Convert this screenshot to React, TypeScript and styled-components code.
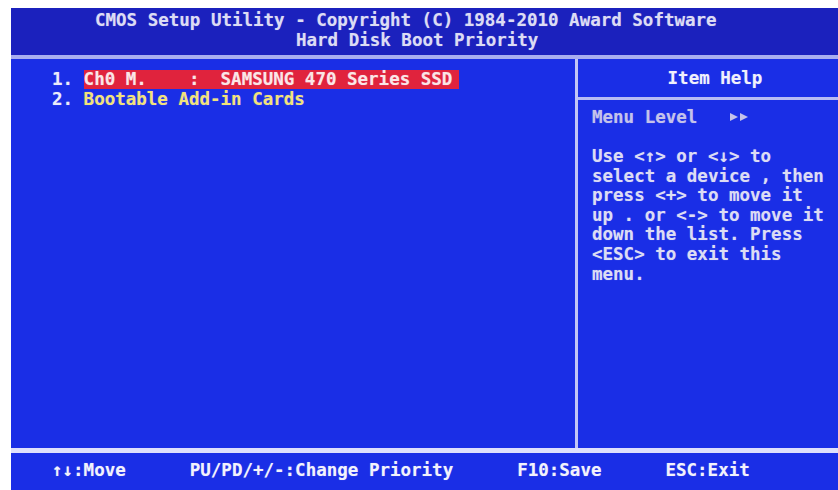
import React from "react";
import styled, { createGlobalStyle } from "styled-components";

const GlobalStyle = createGlobalStyle`
  html, body {
    margin: 0;
    padding: 0;
    background: #ffffff;
  }
  body {
    font-family: "DejaVu Sans Mono", "Liberation Mono", monospace;
  }
`;

const Screen = styled.div`
  margin: 8px 0 0 11px;
  width: 827px;
  height: 482px;
  display: flex;
  flex-direction: column;
  background: #1a2ee6;
  font-family: "DejaVu Sans Mono", "Liberation Mono", monospace;
  font-weight: bold;
  font-size: 17.5px;
  line-height: 20px;
  color: #e4e4f8;
  text-shadow: 0 0 1px rgba(230, 230, 255, 0.45);
  overflow: hidden;
  white-space: pre;
`;

const Header = styled.header`
  height: 47px;
  flex: none;
  box-sizing: border-box;
  padding-top: 2px;
  background: #1b21bd;
  display: flex;
  flex-direction: column;
`;

const TitleLine = styled.div<{ $indent: number }>`
  padding-left: ${(p) => p.$indent}px;
  color: #dcdcf4;
`;

const HRule = styled.div<{ $size: number; $color: string }>`
  height: ${(p) => p.$size}px;
  background: ${(p) => p.$color};
  flex: none;
`;

const Body = styled.main`
  flex: 1;
  display: flex;
  min-height: 0;
`;

const MenuPane = styled.section`
  width: 564px;
  box-sizing: border-box;
  padding: 10px 0 0 41px;
  display: flex;
  flex-direction: column;
`;

const MenuRow = styled.div`
  display: flex;
  height: 20px;
  align-items: center;
`;

const Index = styled.span`
  color: #ececfa;
`;

const Entry = styled.span<{ $selected?: boolean }>`
  color: ${(p) => (p.$selected ? "#fbe6e6" : "#f2e27a")};
  background: ${(p) => (p.$selected ? "#e0233d" : "transparent")};
  height: 19px;
  line-height: 19px;
  padding-right: ${(p) => (p.$selected ? 7 : 0)}px;
`;

const VRule = styled.div`
  width: 3px;
  background: #c2c6f6;
  flex: none;
`;

const HelpPane = styled.aside`
  flex: 1;
  display: flex;
  flex-direction: column;
`;

const HelpTitle = styled.div`
  height: 38px;
  display: flex;
  align-items: center;
  justify-content: center;
  padding-left: 14px;
  color: #f0f0fc;
`;

const HelpBody = styled.div`
  padding: 7px 0 0 14px;
  display: flex;
  flex-direction: column;
`;

const MenuLevel = styled.div`
  color: #c4c2ea;
  height: 20px;
  margin-bottom: 20px;
  display: flex;
  align-items: center;
`;

const Arrows = styled.svg`
  margin-left: 32px;
  display: block;
`;

const HelpLine = styled.div`
  height: 19.6px;
  line-height: 19.6px;
  color: #dcdcf4;
`;

const Footer = styled.footer`
  flex: none;
  height: 37px;
  box-sizing: border-box;
  display: flex;
  gap: 64px;
  padding: 7px 0 0 41px;
  color: #f2f2fc;
`;

const helpLines = [
  "Use <↑> or <↓> to",
  "select a device , then",
  "press <+> to move it",
  "up . or <-> to move it",
  "down the list. Press",
  "<ESC> to exit this",
  "menu.",
];

const footerKeys = [
  "↑↓:Move",
  "PU/PD/+/-:Change Priority",
  "F10:Save",
  "ESC:Exit",
];

// Double right-pointing triangle shown after the submenu label
function LevelArrows() {
  return (
    <Arrows width="20" height="10" viewBox="0 0 20 10" aria-hidden="true">
      <polygon points="1,1 9,5 1,9" fill="#c4c2ea" />
      <polygon points="11,1 19,5 11,9" fill="#c4c2ea" />
    </Arrows>
  );
}

export default function App() {
  return (
    <>
      <GlobalStyle />
      <Screen>
        <Header>
          <TitleLine $indent={84}>
            CMOS Setup Utility - Copyright (C) 1984-2010 Award Software
          </TitleLine>
          <TitleLine $indent={285}>Hard Disk Boot Priority</TitleLine>
        </Header>
        <HRule $size={4} $color="#a9aef0" />
        <Body>
          <MenuPane>
            <MenuRow>
              <Index>1. </Index>
              <Entry $selected>{"Ch0 M.    :  SAMSUNG 470 Series SSD"}</Entry>
            </MenuRow>
            <MenuRow>
              <Index>2. </Index>
              <Entry>Bootable Add-in Cards</Entry>
            </MenuRow>
          </MenuPane>
          <VRule />
          <HelpPane>
            <HelpTitle>Item Help</HelpTitle>
            <HRule $size={3} $color="#b8bcf4" />
            <HelpBody>
              <MenuLevel>
                Menu Level
                <LevelArrows />
              </MenuLevel>
              {helpLines.map((line) => (
                <HelpLine key={line}>{line}</HelpLine>
              ))}
            </HelpBody>
          </HelpPane>
        </Body>
        <HRule $size={5} $color="#dfe0fc" />
        <Footer>
          {footerKeys.map((k) => (
            <span key={k}>{k}</span>
          ))}
        </Footer>
      </Screen>
    </>
  );
}
